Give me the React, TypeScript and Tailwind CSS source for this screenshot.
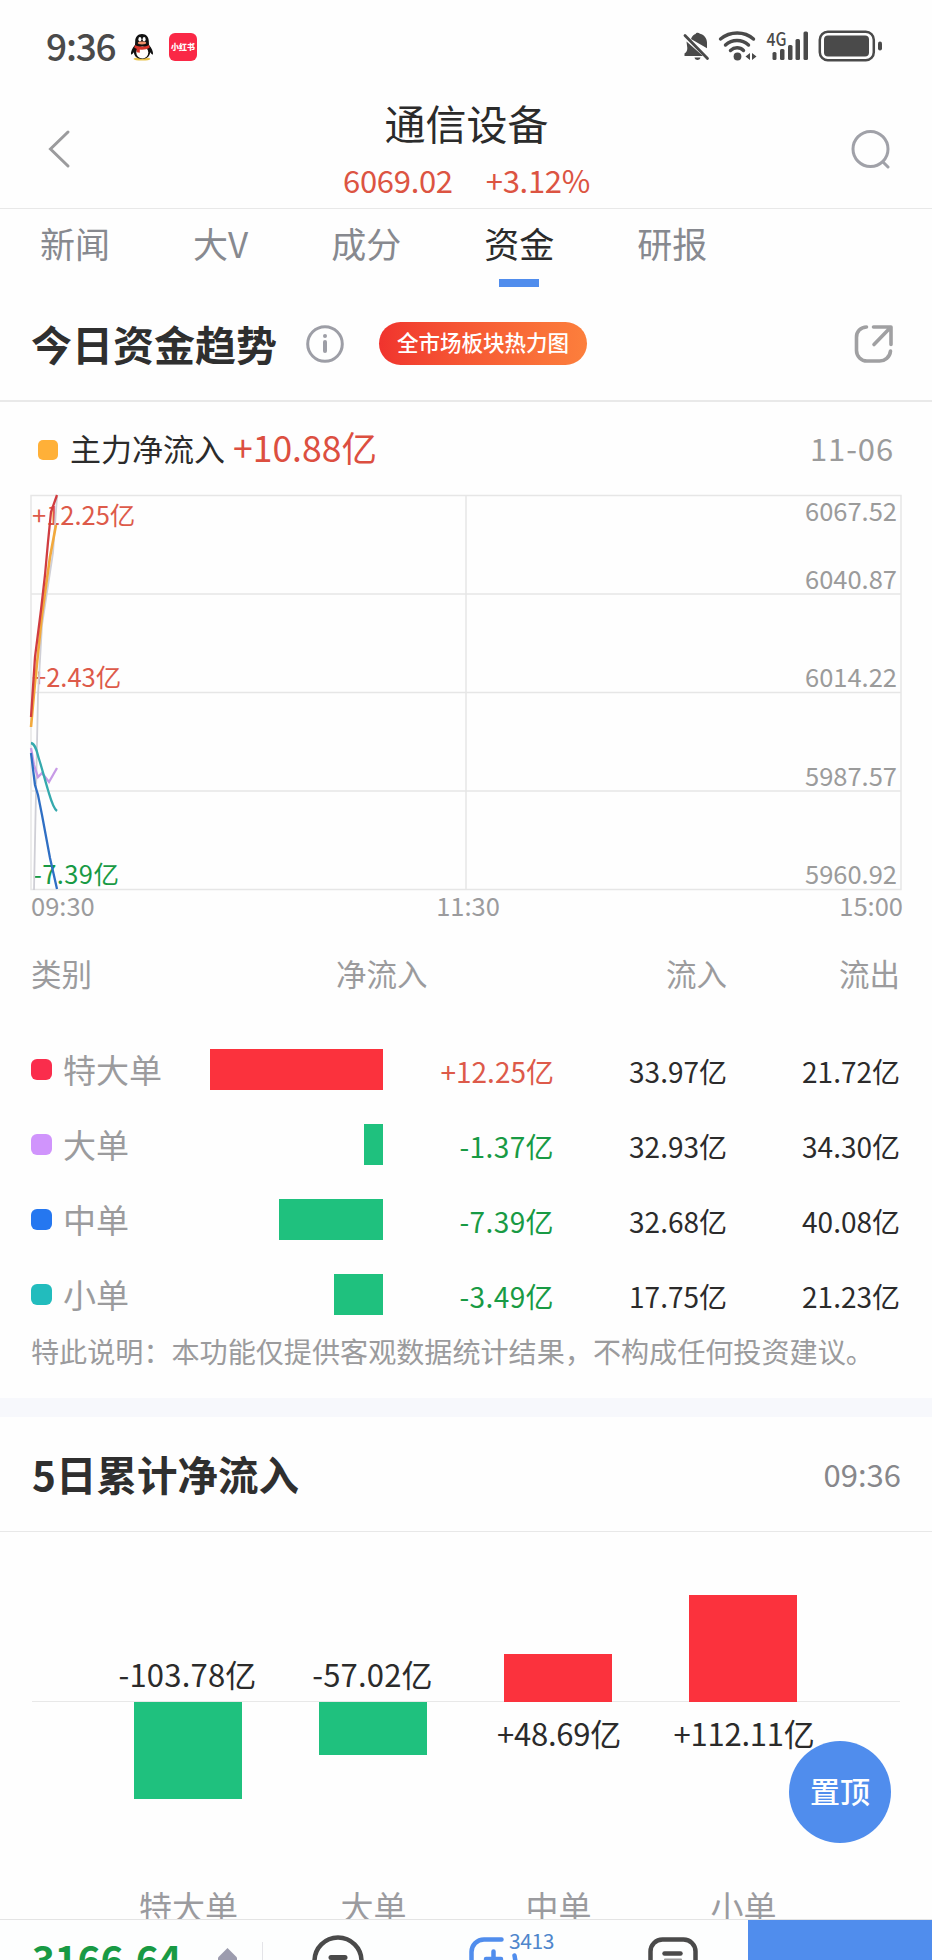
interface FlowRow {
  name: string;
  dot: string;
  bar: number;
  net: string;
  inflow: string;
  outflow: string;
}

interface FiveDay {
  name: string;
  value: string;
  height: number;
}

const rows: FlowRow[] = [
  { name: "特大单", dot: "bg-[#fa2d4c]", bar: 173, net: "+12.25亿", inflow: "33.97亿", outflow: "21.72亿" },
  { name: "大单", dot: "bg-[#d094fc]", bar: 19, net: "-1.37亿", inflow: "32.93亿", outflow: "34.30亿" },
  { name: "中单", dot: "bg-[#2577f0]", bar: 104, net: "-7.39亿", inflow: "32.68亿", outflow: "40.08亿" },
  { name: "小单", dot: "bg-[#22bcbd]", bar: 49, net: "-3.49亿", inflow: "17.75亿", outflow: "21.23亿" },
];

const fiveDays: FiveDay[] = [
  { name: "特大单", value: "-103.78亿", height: 97 },
  { name: "大单", value: "-57.02亿", height: 53 },
  { name: "中单", value: "+48.69亿", height: 48 },
  { name: "小单", value: "+112.11亿", height: 107 },
];

const tabs = ["新闻", "大V", "成分", "资金", "研报"];

const StatusBar = () => (
  <div className="flex h-[94px] shrink-0 items-center justify-between pl-[46px] pr-[50px] text-[#4a4a4a]">
    <div className="flex items-center">
      <span className="-mt-[4px] w-[84px] text-[37px] leading-none font-medium tracking-[-1.2px]">9:36</span>
      <svg width="24" height="28" viewBox="0 0 24 28">
        <ellipse cx="12" cy="26" rx="8.5" ry="1.6" fill="#e8c24a" />
        <path d="M12 1C7.5 1 5.2 4.4 5.2 8.3L5 12C2.4 15 .6 18.6 1 21.5c.8.5 2-.8 2.8-2.200C4.5 24 7.5 26 12 26s7.500-2 8.200-6.700c.8 1.400 2 2.700 2.800 2.200.4-2.900-1.400-6.500-4-9.500l-.2-3.700C18.8 4.4 16.500 1 12 1z" fill="#111" />
        <ellipse cx="12.300" cy="19.500" rx="6" ry="6" fill="#fff" />
        <ellipse cx="9.900" cy="6.300" rx="1.500" ry="2.200" fill="#fff" />
        <ellipse cx="14.100" cy="6.300" rx="1.500" ry="2.200" fill="#fff" />
        <ellipse cx="12" cy="10" rx="4.200" ry="1.400" fill="#f0906a" />
        <path d="M4.800 12c4.500 2.200 10 2.200 14.400 0l.4 2.800c-3 1.700-6.600 2.200-9.800 1.700v3.300l-3.200-.5v-3.500l-2.200-1z" fill="#d8352c" />
      </svg>
      <span className="ml-[15px] flex h-7 w-7 items-center justify-center rounded-[6px] bg-[#fa2846] text-[8px] leading-none font-black whitespace-nowrap text-white">
        小红书
      </span>
    </div>
    <svg width="199" height="34" viewBox="0 0 199 34" fill="#4a4a4a" className="overflow-visible">
      {/* muted bell */}
      <path d="M8 9c1-3 3-4.500 4.600-5C13 2.500 15.500 2 17 3.800c4.600 1.200 7 5 7 9v5.400z" />
      <path d="M3.500 11.500 20 26H1.500v-2.500c2-1.200 2.800-3 2.800-5.500z" />
      <path d="M11.500 27.500h6c-.5 1.800-1.700 2.500-3 2.500s-2.500-.7-3-2.500z" />
      <path d="M2 5.500 24.500 28.500" stroke="#4a4a4a" strokeWidth="2.800" strokeLinecap="round" />
      {/* wifi */}
      <g fill="none" stroke="#4a4a4a" strokeWidth="3.400" strokeLinecap="round">
        <path d="M37.500 9c9.500-8 24-8 33 0" />
        <path d="M42.500 15c6.500-6 16.500-6 23 0" />
        <path d="M47.500 20.500c3.800-3.600 9.500-3.600 13 0" />
      </g>
      <circle cx="54.500" cy="26.500" r="3.900" />
      <path d="M67 23v7l-4.500-3.500zM69 23v7l4.500-3.500z" />
      {/* signal */}
      <text x="83.500" y="15.500" fontSize="18" fontWeight="500" textLength="20" lengthAdjust="spacingAndGlyphs">4G</text>
      <rect x="89.500" y="22" width="4" height="8" rx="1.500" />
      <rect x="97" y="19" width="4.500" height="11" rx="1.500" />
      <rect x="105" y="15" width="4.500" height="15" rx="1.500" />
      <rect x="112.500" y="9" width="4.500" height="21" rx="1.500" />
      <rect x="120.500" y="1.500" width="4.500" height="28.500" rx="1.500" />
      {/* battery */}
      <rect x="136.800" y="1.800" width="54" height="28.500" rx="8" fill="none" stroke="#4a4a4a" strokeWidth="2.500" />
      <rect x="141" y="5.500" width="45" height="21" rx="4" />
      <rect x="195" y="11.500" width="4" height="9" rx="2" />
    </svg>
  </div>
);

const Header = () => (
  <header className="flex h-[115px] shrink-0 justify-between border-b border-[#e8e8e8] pl-[48px] pr-[41px]">
    <svg width="24" height="40" viewBox="0 0 24 40" fill="none" className="mt-[35px]">
      <path d="M20 3 2.500 20 20 37" stroke="#9b9b9d" strokeWidth="3" strokeLinecap="round" />
    </svg>
    <div className="flex flex-col items-center pl-[10px]">
      <h1 className="mt-[6px] text-[41px] leading-[44px] text-[#2b2b2b]">通信设备</h1>
      <div className="mt-[18px] flex gap-[33px] text-[31px] leading-[36px] tracking-[-0.3px] text-[#dc5442]">
        <span>6069.02</span>
        <span>+3.12%</span>
      </div>
    </div>
    <svg width="40" height="40" viewBox="0 0 40 40" fill="none" stroke="#a0a1a8" strokeWidth="3" className="mt-[35px]">
      <circle cx="19.500" cy="20" r="17.500" />
      <path d="m32 33 5 5" strokeLinecap="round" />
    </svg>
  </header>
);

const TrendChart = () => (
  <div className="relative mx-[31px] h-[396px] text-[25.500px] leading-[26px]">
    <svg width="871" height="396" viewBox="0 0 871 396" fill="none" className="block overflow-visible">
      <g stroke="#e6e6e6" strokeWidth="1.500">
        <path d="M0 .5h870v394H0z" />
        <path d="M0 99h870M0 197.500h870M0 296h870M435 0v394" />
      </g>
    </svg>
    <div className="absolute inset-0 text-[#dd5a4a]">
      <span className="absolute left-[1px] top-[6px]">+12.25亿</span>
      <span className="absolute left-[1px] top-[168px]">+2.43亿</span>
      <span className="absolute left-[2px] top-[365px] tracking-[0.4px] text-[#189a44]">-7.39亿</span>
    </div>
    <div className="absolute inset-0 text-right text-[#9b9b9b]">
      <span className="absolute right-[4px] top-[2px]">6067.52</span>
      <span className="absolute right-[4px] top-[70px]">6040.87</span>
      <span className="absolute right-[4px] top-[168px]">6014.22</span>
      <span className="absolute right-[4px] top-[267px]">5987.57</span>
      <span className="absolute right-[4px] top-[365px]">5960.92</span>
    </div>
    <svg width="871" height="396" viewBox="0 0 871 396" fill="none" strokeWidth="2.300" className="absolute inset-0 overflow-visible">
      <path d="M3 395 7 200 11 130 22 58 26 2" stroke="#cfcfd6" strokeWidth="1.800" />
      <path d="M0 232 4 188 11 120 19 62 25 30" stroke="#f2a93c" strokeWidth="2.600" />
      <path d="M0 222 4 162 10 115 14 80 17 47 20 17 26 0" stroke="#d03c40" />
      <path d="M0 253 3 270 7 282 11 278 18 287 26 273" stroke="#c79ae6" />
      <path d="M0 248C5 249 6 258 8 264S14 285 17 295 22 313 26 316" stroke="#35a9ad" />
      <path d="M0 258 4 290 7 300 11 320 19 363 26 394" stroke="#2f6fc4" />
    </svg>
  </div>
);

const FlowTable = () => (
  <div className="pl-[31px] pr-[32px]">
    <div className="grid grid-cols-[179px_173px_171px_173px_173px] text-[30.500px] leading-[40px] text-[#9b9b9d]">
      <span>类别</span>
      <span className="col-span-2 pl-[126px]">净流入</span>
      <span className="text-right">流入</span>
      <span className="text-right">流出</span>
    </div>
    <div className="mt-[39px]">
      {rows.map((row) => (
        <div
          key={row.name}
          className="grid h-[75px] grid-cols-[179px_173px_171px_173px_173px] items-center text-[28px] leading-[40px] text-[#2b2b2b]"
        >
          <div className="flex items-center text-[33px] text-[#9b9b9d]">
            <span className={`mr-[11px] h-[21px] w-[21px] rounded-[6px] ${row.dot}`} />
            <span className="-mt-[2px]">{row.name}</span>
          </div>
          <div className="flex justify-end">
            <div
              className={`h-[41px] ${row.net.startsWith("+") ? "bg-[#fb323d]" : "bg-[#1fc17e]"}`}
              style={{ width: row.bar }}
            />
          </div>
          <span
            className={`pt-[3px] text-right ${row.net.startsWith("+") ? "text-[#dd5a4a]" : "tracking-[0.4px] text-[#189a44]"}`}
          >
            {row.net}
          </span>
          <span className="pt-[3px] text-right">{row.inflow}</span>
          <span className="pt-[3px] text-right">{row.outflow}</span>
        </div>
      ))}
    </div>
    <p className="mt-px text-[28.100px] leading-[36px] whitespace-nowrap text-[#9b9b9d]">
      特此说明：本功能仅提供客观数据统计结果，不构成任何投资建议。
    </p>
  </div>
);

const FiveDayChart = () => (
  <div className="px-[32px]">
    {/* zero axis sits under the bars */}
    <div className="grid h-[386px] grid-cols-[185px_185px_185px_185px] bg-[linear-gradient(#e8e8e8,#e8e8e8)] bg-[length:100%_1px] bg-[position:0_168px] bg-no-repeat pl-[63px]">
      {fiveDays.map((d) => {
        const up = d.value.startsWith("+");
        return (
          <div key={d.name} className="flex flex-col items-center">
            <div className="flex h-[169px] flex-col justify-end">
              {up ? (
                <div className="w-[108px] bg-[#fb323d]" style={{ height: d.height }} />
              ) : (
                <span className="mb-[8px] text-[31px] leading-[40px] tracking-[0.2px] text-[#2b2b2b]">{d.value}</span>
              )}
            </div>
            <div className="h-[184px]">
              {up ? (
                <div className="mt-[11px] pl-[3px] text-[31px] leading-[40px] tracking-[-0.2px] text-[#2b2b2b]">{d.value}</div>
              ) : (
                <div className="w-[108px] bg-[#1fc17e]" style={{ height: d.height }} />
              )}
            </div>
            <span className="pl-[2px] text-[33px] leading-[40px] whitespace-nowrap text-[#9b9b9f]">{d.name}</span>
          </div>
        );
      })}
    </div>
  </div>
);

const BottomBar = () => (
  <footer className="relative flex h-[41px] shrink-0 items-start overflow-hidden border-t border-[#e4e4e4] bg-[#fdfefe]">
    <span className="ml-[32px] mt-[17px] w-[186px] text-[39px] leading-[40px] font-bold tracking-[-0.2px] text-[#189a44]">3166.64</span>
    <svg width="19" height="12" viewBox="0 0 19 12" className="mt-[28px]">
      <path d="M9.500 0 19 9.500V12H0V9.500z" fill="#9c9cae" />
    </svg>
    <div className="ml-[25px] mt-[22px] h-[30px] w-px bg-[#e4e4e8]" />
    <svg width="52" height="52" viewBox="0 0 52 52" fill="none" stroke="#4a4a4a" strokeWidth="4.500" className="ml-[49px] mt-[14px]">
      <circle cx="26" cy="27" r="23.500" />
      <path d="M19 23.500h14" strokeWidth="5" strokeLinecap="round" />
    </svg>
    <svg width="52" height="52" viewBox="0 0 52 52" fill="none" stroke="#508ded" strokeWidth="4.500" strokeLinecap="round" className="ml-[105px] mt-[14px]">
      <path d="M32.500 5.500H15A12.500 12.500 0 0 0 2.500 18v24M24.500 17.500v16M17 25h15M45.500 21.500l1.500 9" />
    </svg>
    <span className="-ml-[12px] mt-[9px] w-[46px] text-[21px] leading-[22px] tracking-[-0.4px] text-[#4f86cc]">3413</span>
    <svg width="52" height="52" viewBox="0 0 52 52" fill="none" stroke="#4a4a4a" strokeWidth="4.500" strokeLinecap="round" className="ml-[92px] mt-[14px]">
      <rect x="3.500" y="5.500" width="45" height="42" rx="12" />
      <path d="M17.500 19.500h16" />
      <path d="M18 25.500h16" stroke="#9a9a9a" strokeWidth="2" />
    </svg>
    <div className="ml-auto h-full w-[184px] bg-[#508ded]" />
  </footer>
);

export default function App() {
  return (
    <div className="relative flex h-[1960px] w-[932px] flex-col overflow-hidden bg-[#fefefe] font-['Noto_Sans_CJK_SC',sans-serif]">
      <StatusBar />
      <Header />

      <nav className="flex h-[78px] shrink-0 gap-[83px] pl-[40px] pt-[12px] text-[35px] leading-[44px] text-[#87898f]">
        {tabs.map((tab) => (
          <div key={tab} className={`flex flex-col items-center ${tab === "资金" ? "text-[#2b2b2b]" : ""}`}>
            <span>{tab}</span>
            {tab === "资金" && <span className="mt-[14px] h-2 w-10 bg-[#508ded]" />}
          </div>
        ))}
      </nav>

      <section className="flex h-[115px] shrink-0 items-center border-b-2 border-[#e9e9e9] pl-[31px] pr-[38px]">
        <h2 className="-mt-[2px] text-[41px] leading-[44px] font-bold text-[#2f2f2f]">今日资金趋势</h2>
        <svg width="38" height="38" viewBox="0 0 38 38" fill="none" stroke="#9d9ea6" strokeWidth="3" className="ml-[29px]">
          <circle cx="19" cy="19" r="17.300" />
          <path d="M19 17v9" strokeWidth="4" strokeLinecap="round" />
          <circle cx="19" cy="11" r="2" fill="#9d9ea6" stroke="none" />
        </svg>
        <span className="ml-[35px] flex h-[43px] w-[208px] items-center justify-center rounded-full bg-linear-to-r from-[#f0332e] to-[#fc7f3c] pb-[2px] text-[21.500px] font-medium text-white">
          全市场板块热力图
        </span>
        <svg width="40" height="40" viewBox="0 0 40 40" fill="none" stroke="#a0a0a2" strokeWidth="3.600" strokeLinecap="round" className="ml-auto">
          <path d="M12.500 3A10 10 0 0 0 2.500 13.500v13A10.500 10.500 0 0 0 13 37h12A11 11 0 0 0 36.500 27" />
          <path d="M19.500 3h17.500V20.500M36 4 20 20.500" strokeLinejoin="round" />
        </svg>
      </section>

      <section className="flex h-[93px] shrink-0 items-center pb-[3px] pl-[38px] pr-[38px] text-[31px] leading-[40px]">
        <span className="mt-[5px] h-5 w-5 rounded-[5px] bg-[#ffb038]" />
        <span className="ml-3 mt-px text-[31px] text-[#2b2b2b]">主力净流入</span>
        <span className="ml-[8px] text-[35.500px] text-[#dc4f40]">+10.88亿</span>
        <span className="ml-auto mt-[2px] tracking-[0.9px] text-[#9b9b9b]">11-06</span>
      </section>

      <section className="h-[903px] shrink-0">
        <TrendChart />
        <div className="flex justify-between pl-[31px] pr-[29px] text-[25.500px] leading-[28px] text-[#9b9b9d]">
          <span>09:30</span>
          <span className="pl-[2px]">11:30</span>
          <span>15:00</span>
        </div>
        <div className="mt-[34px]">
          <FlowTable />
        </div>
      </section>

      <div className="h-[19px] shrink-0 bg-[#f7f8fc]" />

      <section className="flex h-[115px] shrink-0 items-center justify-between border-b border-[#e8e8e8] pl-[32px] pr-[31px]">
        <h2 className="text-[40.500px] leading-[44px] font-bold text-[#2f2f2f]">5日累计净流入</h2>
        <span className="text-[31px] text-[#87878b]">09:36</span>
      </section>

      <div className="h-px shrink-0" />
      <FiveDayChart />
      <BottomBar />

      <button className="absolute right-[41px] top-[1741px] flex h-[102px] w-[102px] items-center justify-center rounded-full bg-[#508ded] pb-[3px] text-[30px] font-medium text-white">
        置顶
      </button>
    </div>
  );
}
